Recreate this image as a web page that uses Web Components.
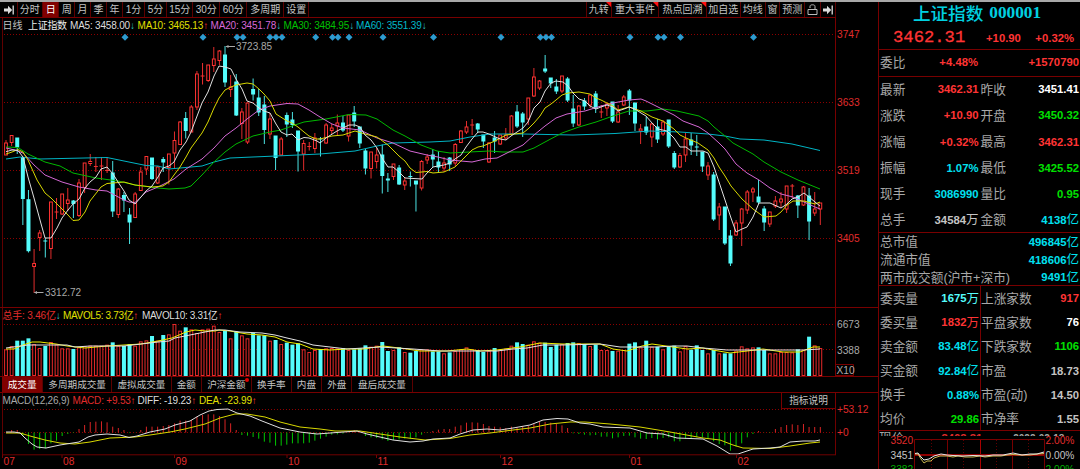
<!DOCTYPE html>
<html lang="zh-CN">
<head>
<meta charset="utf-8">
<title>上证指数 000001</title>
<style>
  body {
    margin: 0;
    background: #000;
    overflow: hidden;
  }
</style>
</head>
<body>
<stock-terminal></stock-terminal>

<script>
const STEP = 5.616;
const FIRST_X = 6;

// colour, high, open/close top, open/close bottom, low
const CANDLES = `
r 140 143 155 155|r 135 135.5 142.5 146|c 138 138 148 154|c 157 157.5 199.5 225|c 190 199.7 251.7 252.5
r 249 263.5 266.5 293|r 230 233 237.5 251|c 238 241 241 257.5|r 202 202 248.5 259|r 198 212 212 219
r 194 194 214 215|r 188 200 203.5 211|c 200 201 204.5 218|r 179 183 215.5 217|r 163 163 187.5 193
r 154 161.5 163.5 166|r 157 166.5 166.5 172|r 157 166 166 180|r 157 170.5 170.5 173|c 161 173 212 217
r 188 189 214.5 218|c 192 195.5 201 212|c 208 215 223 244|r 192 194 217.5 218|r 167 172 190.5 191
r 156 156.5 169 175|c 158 158 179.5 180|r 166 167 183 184|c 157 159.5 163 172|r 154 154 167.5 184.5
r 131.5 140.5 153 168|r 121 122 144.5 145|c 112 118.5 131.5 138.5|r 105 107 132 132|r 71 74 107 110
r 63 76 76 84.5|r 65 65 80.5 82|r 47 59 65.5 72|r 50 51 60.5 65|c 46 55 83 87
r 75 87 89.5 97|c 74 82 116 116|r 108 112 123.5 139|r 103 103 142 144|c 78.5 89.5 95 100.5
c 89 98 113 116|c 96 105 130.5 144|r 113 119 134 139|c 136 136 158.5 170|r 137 139 155 155
c 112.5 115.5 125 137|c 112 120 125.5 128|c 131 131 152 171.5|r 140 143.5 154 170.5|r 142 146.5 146.5 150.5
r 133 138 148.5 153|c 137 139 140 156.5|r 123 125 143 144|r 124 128 130.5 134|r 114.5 123 126 135
c 116 123 131 132|r 115 115 136 141.5|c 106 113 122 127|c 127 127 144 148|c 149 151 169 174.5
r 152 152 168.5 178.5|r 148 155 161.5 168.5|c 144.5 155 176.5 193.5|c 173 179 181 192|r 164 164 176.5 180
c 165 168 185 185|r 177 181 185 190|c 171.5 176.5 176.5 186.5|c 181 181 185 211.5|r 160 161.5 188 190.5
r 154 157 160 164|c 149 155 160 167|c 151 162 168 172|r 157 163 168 172|c 157 158 165 171
r 143 144.5 163 166|r 130 131 142.5 143|r 121 127 132 134|r 119 125 125 135|c 123 124 130 133
c 135 135 142 148|r 142 143 162 163|c 131 138 142 153|r 135 135 144 145|r 128 135 138 140
r 115 116 134 135|c 105 112 127 128|c 112 114 123 137|r 98 98 119 125|r 68 77 96 97
r 80 81 88 90|c 55 69 72 73|c 78 78 84 88|c 79 87 92 94|r 76 76 91 93
c 77 79 101 102|c 95 109 124 127|r 105 106 125 126|c 98 101 107 110|r 94 95 105 108
c 91 94 109 113|r 105 112 112 118|r 103 104 108 116|c 102 102 122 123|r 105 112 122 123
r 95 97 105 106|c 89 91 101 115|c 103 103 124 131|r 124 129 131 144|c 117 127 133 135
r 123 124 137 147|c 119 127 140 143|r 120 122 134 136|c 120 120 147 148|c 151 153.5 168 169
r 153 155.5 167 168|r 133 139 155 162|c 133 140 146 155|c 135 147 147 156|c 152 152 167 172
r 162 166 175 180|c 172 175 220 221|r 203 207 215 230|c 207 207 244 245|c 230 236 264 266
r 220 223 235 236|r 208 209 223 246|r 190 192 210 214|r 187 189 192 202|c 180 197 203 204
c 206 209 223 231|r 212 212 224 227|r 196 201 206 208|r 192 199 202 208|r 186 186 209 213
r 184 186 186 198|c 195 196 206 218|r 186 187 205 206|c 188 196 222 240|r 192 209 213 216
r 203 203 209 225`.trim().split(/[|\n]/).map((row) => {
  const [kind, ...nums] = row.split(" ");
  const [high, top, bottom, low] = nums.map(Number);
  return { up: kind === "r", high, top, bottom, low };
});

// tops of the volume bars, in thirds of a pixel below y = 300
const VOLUMES = [
  148, 138, 122, 122, 115, 132, 144, 138, 126, 133, 145, 145, 147, 142, 138, 137, 137, 137, 134, 127,
  137, 138, 132, 137, 124, 121, 108, 122, 105, 103, 72, 92, 82, 88, 99, 88, 86, 77, 96, 93,
  115, 95, 106, 115, 99, 106, 106, 122, 120, 132, 128, 134, 130, 148, 156, 150, 147, 145, 144, 145,
  144, 150, 148, 145, 136, 140, 137, 126, 153, 150, 142, 156, 158, 153, 148, 148, 154, 154, 160, 157,
  153, 148, 142, 148, 150, 156, 152, 144, 148, 146, 137, 127, 132, 134, 124, 128, 128, 141, 134, 132,
  129, 127, 129, 132, 138, 134, 150, 150, 153, 152, 150, 131, 127, 142, 122, 140, 140, 148, 140, 137,
  154, 138, 149, 136, 150, 160, 150, 160, 160, 160, 152, 139, 145, 142, 142, 150, 160, 160, 156, 156,
  157, 148, 150, 110, 136, 144,
];

// ends of the MACD bars, same units, zero line at 397
const MACD = [
  397, 390, 390, 408, 432, 449, 447, 445, 430, 422, 408, 402, 399, 387, 375, 366, 365, 364, 367, 380,
  384, 390, 399, 398, 390, 380, 380, 380, 378, 375, 370, 362, 362, 360, 350, 345, 343, 343, 348, 358,
  370, 390, 405, 407, 411, 416, 425, 428, 437, 437, 434, 430, 430, 430, 428, 422, 416, 410, 404, 403,
  401, 398, 390, 395, 408, 412, 414, 418, 423, 420, 418, 416, 416, 412, 404, 399, 393, 389, 387, 387,
  380, 376, 368, 367, 368, 372, 378, 380, 382, 384, 380, 382, 378, 378, 372, 366, 366, 368, 372, 376,
  384, 400, 402, 404, 406, 405, 410, 410, 415, 412, 408, 407, 412, 416, 417, 414, 418, 414, 412, 424,
  424, 416, 416, 412, 412, 416, 424, 432, 436, 452, 440, 430, 412, 402, 393, 398, 399, 387, 381, 375,
  373, 375, 372, 381, 381, 381,
];

const LINES = {
  ma5: "6,151.7 12,150 18,150.5 23,157 28,177 34,198 40,220 45,238 51,238 57,228 62,218 68,210 73,204 79,199 85,188 90,182 96,177 101,169 107,167 113,174 118,182 124,191 129,200 135,204 141,197 146,191 152,186 158,177 163,168 169,166 174,162 180,150 186,142 191,132 202,103 208,92 214,76 219,66 225,67 231,69 236,79 242,89 247,101 253,103 259,108 264,111 270,113 276,124 281,132 287,135 292,134 298,140 304,137.5 309,138 317,141 320,143 326,138 337,131 349,125 355,125 360,127 365,135 371,140 377,148 382,158 388,167 393,167 399,172 405,178 422,179 427,173 433,167 438,166 444,165 450,163 455,159 461,155 466,147 472,139 478,132 483,132 489,134 500,139 506,140 511,136 517,132 523,128 528,122 534,108 540,102 545,91 551,83 556,81 563,82 568,86 573,93 579,99 585,101 590,106 596,109 601,107 607,105 613,107 618,111 624,109 629,107 635,109 641,113 646,116 652,123 658,129 667,131 674,138 680,147 686,147 691,151 703,151 708,153 714,167 719,182 725,200 731,218 736,232 742,229 747,227 753,217 759,203 770,203 781,208 787,204 792,199 798,197 804,193 809,197 815,202 820,206",
  ma10: "6,154 12,152 18,149.5 23,152 28,160 37,180 45,193 51,198 60,207 68,215 73,220.5 79,220 85,212 90,201 101,187 107,183.5 124,182 135,185 152,187 163,186 169,182 174,175 180,167 186,157 191,148 202,133 208,122 214,108 219,98 225,90 231,87 236,85 247,83 253,84 259,89 264,94 270,101 276,114 287,121 292,123 298,127 304,132 309,136 316,139 320,139 332,136 343,135 355,131 365,134 377,137 388,145 399,156 405,161 410,168 416,172.5 427,171.5 433,173 444,172 455,167 463,159 472,150 478,147 483,146 495,141 506,135 523,133 528,129 534,123 540,116 545,108 551,104 556,100 562,95 568,93 579,92 590,94 596,98 601,100 613,106 618,110 629,107 641,111 652,117 663,121 674,129 680,135 686,138 698,143 708,150 714,158 719,167 725,176 731,186 742,199 753,209 764,217 776,216 781,212 787,205 793,201 804,201 815,204 820,202",
  ma20: "6,148 15,150 23,153 34,165 45,175 62,182 79,187 96,190 107,191 124,200 129,202 135,202.5 141,197 146,192 158,187 174,179 186,169 202,159 214,148 225,136 236,128 247,119 259,110 270,106 287,103.5 298,104 309,110 320,117 332,124 343,128 360,130 377,138 393,143 410,151 427,155 438,157 450,160 461,161 472,162 485,159 497,158 507,153 523,145 534,135 545,126 556,118 567,114 585,111 601,106 613,103 629,100 641,99 646,101 658,107 674,115 683,121 699,127 708,133 719,143 725,149 736,164 747,173 759,180 770,188 781,194 793,197 804,202 815,207 820,209",
  ma30: "6,147 18,147.5 28,154 45,162 60,166 73,173 96,178 118,181 135,185 158,188 169,189 185,188 191,186 202,175 214,162 225,152 236,144 253,136 270,132 281,130 292,126 304,122 326,119 349,114.5 366,115 377,119 393,130 405,136 421,145 437,151 450,153 489,151 503,152 523,152 534,148 545,142 562,133 579,127 596,122 613,116 629,111 647,111 663,109 677,111 699,116 708,121 714,127 725,136 733,143 753,154 764,162 781,172 798,180 820,189",
  ma60: "6,159 20,157 40,159 62,158.5 107,157.5 124,161 146,165.5 158,166 169,169 202,166 214,162 230,158 276,156 320,154 355,151 377,146 393,143 430,142 450,141 470,137 490,134 523,134 573,135 615,133.5 650,131 680,132 708,134 725,136 740,139 764,140 792,144 820,150.5",
  vol5: "6,349 14,349 23,345 32,342 40,342 56,344 67,346 85,348 107,346 124,345 141,344 158,341 172,338 186,332 195,330 205,331 215,331 219,330 230,331 247,334 262,335 275,337 287,342 300,344 313,349 330,350 347,349 363,349 383,346 407,349 420,351 447,351 467,349 480,351 497,350 520,347 540,343 563,344 600,344 613,349 627,351 642,346 652,344 673,347 687,349 703,348 713,350 730,353 747,351 763,349 783,352 800,352 813,347 820,347",
  vol10: "6,348 28,345 67,345 75,347 90,346 124,346 141,344 158,342 169,341 175,338 190,335 205,332 215,330 225,330 240,332 262,333 275,335 287,338 300,341 313,345 330,347 347,349 380,347 413,349 440,351 467,351 497,351 513,349 527,348 543,345 563,345 600,344 620,347 657,347 673,346 687,346 703,348 727,350 803,350 820,349",
  diff: "6,432 14,432 20,433 25,438 32,444 37,447 46,448 60,445 79,442 88,437 95,435 107,434 120,435 129,437.5 137,436 150,432 165,429 175,425 190,421 200,415 209,411 217,409.5 228,409 237,413 250,416 262,421 280,428 300,432 317,434 330,433 357,431 367,434 380,437 393,440 410,442 423,441 433,439 450,438 460,434 473,430 487,429 500,430 513,428 530,425 543,420 557,418.5 568,419 580,423 590,424 603,427 630,428 647,433 663,434 677,438 703,439 717,446 730,454 738,454 753,449 770,448 780,447 790,442 803,441 815,441 820,440",
  dea: "6,433 20,433 30,436 45,440 60,443 75,444 90,442 110,438 135,437 150,435 170,432 185,429 205,424 220,418 235,414 247,414 265,417 280,422 300,427 320,429 335,431 360,431 380,434 400,437 425,440 450,438.5 470,435 490,433 513,430 530,428 550,424 570,422 585,422 610,424 640,427 670,432 703,438 720,440 733,445 743,448 770,448.5 790,446 810,443 820,442",
};

const SANS = '"Liberation Sans", "Noto Sans CJK SC", sans-serif';
const RED = "#e02c2c";

const line = (name, color) =>
  `<polyline points="${LINES[name]}" fill="none" stroke="${color}" stroke-width="1"/>`;
const grid = (y) =>
  `<line x1="4" x2="835" y1="${y}" y2="${y}" stroke="#8c0000" stroke-dasharray="1 2"/>`;
const xAt = (i) => FIRST_X + i * STEP;

function setShadow(element, html) {
  element.attachShadow({ mode: "open" }).innerHTML = html;
}

class ToolButton extends HTMLElement {
  connectedCallback() {
    setShadow(this, `
      <style>
        :host {
          box-sizing: border-box;
          flex: none;
          display: flex;
          align-items: center;
          justify-content: center;
          width: calc(var(--w) * 1px);
          height: 15px;
          border-right: 1px solid #5c0000;
          color: #c4c4c4;
          font: var(--size, 10px)/15px ${SANS};
          white-space: nowrap;
          position: relative;
        }
        :host([active]) { background: #800000; color: #fff; }
        :host([hot])::after {
          content: "";
          position: absolute;
          top: 0;
          right: 0;
          border-top: 5px solid #ff1010;
          border-left: 5px solid transparent;
        }
        :host([dot])::after {
          content: "";
          position: absolute;
          top: 1px;
          right: 2px;
          width: 4px;
          height: 4px;
          border-radius: 50%;
          background: #e00000;
        }
      </style>
      <slot></slot>`);
    this.style.setProperty("--w", this.getAttribute("w"));
  }
}

class ToolBar extends HTMLElement {
  connectedCallback() {
    const arrow = `<svg width="12" height="10" viewBox="0 0 12 10"><path d="M1 3.5h4V0.8L9.2 5 5 9.2V6.5H1z" fill="#ddd"/><path d="M10.2 .5v9" stroke="#ddd" stroke-width="1.3"/></svg>`;
    const lock = `<svg width="11" height="12" viewBox="0 0 11 12"><path d="M1 5.5h9v5H1zM3 4V2.500C3 1.2 4 .8 5.5.8S8 1.2 8 2.500v3" fill="none" stroke="#bbb"/></svg>`;
    setShadow(this, `
      <style>
        :host {
          display: flex;
          height: 15px;
          width: 834px;
          padding-left: 2px;
          border-bottom: 1px solid #780000;
        }
        .right { display: flex; margin-left: auto; border-left: 1px solid #5c0000; }
      </style>
      <tool-button w="15.7">${arrow}</tool-button>
      <tool-button w="25.3">分时</tool-button>
      <tool-button w="16.5" active>日</tool-button>
      <tool-button w="15.5">周</tool-button>
      <tool-button w="16">月</tool-button>
      <tool-button w="16">季</tool-button>
      <tool-button w="16">年</tool-button>
      <tool-button w="22">1分</tool-button>
      <tool-button w="22">5分</tool-button>
      <tool-button w="26.5">15分</tool-button>
      <tool-button w="26.5">30分</tool-button>
      <tool-button w="27.5">60分</tool-button>
      <tool-button w="36.5">多周期</tool-button>
      <tool-button w="25.5">设置</tool-button>
      <div class="right">
        <tool-button w="25" hot>九转</tool-button>
        <tool-button w="47.6" hot>重大事件</tool-button>
        <tool-button w="47.4" hot>热点回溯</tool-button>
        <tool-button w="34">加自选</tool-button>
        <tool-button w="25">均线</tool-button>
        <tool-button w="14.6">窗</tool-button>
        <tool-button w="25">预测</tool-button>
        <tool-button w="15.4">${lock}</tool-button>
        <tool-button w="15.3">${arrow}</tool-button>
      </div>`);
  }
}

class ChartLegend extends HTMLElement {
  connectedCallback() {
    setShadow(this, `
      <style>
        :host {
          box-sizing: border-box;
          display: flex;
          width: 836px;
          height: var(--h, 14px);
          padding-left: 2.5px;
          border-right: 1px solid #780000;
          font: 10px/15px ${SANS};
          white-space: pre;
          color: #c4c4c4;
        }
      </style>
      <slot></slot>`);
  }
}

class LegendItem extends HTMLElement {
  connectedCallback() {
    const trend = this.getAttribute("trend");
    const mark = trend ? `<span class="mark">${trend === "up" ? "↑" : "↓"}</span>` : "";
    setShadow(this, `
      <style>
        :host {
          flex: none;
          display: flex;
          width: calc(var(--w) * 1px);
        }
        .mark {
          color: ${trend === "up" ? "#ff3434" : "#30c8c8"};
          font: 10px/15px "Liberation Sans", sans-serif;
        }
      </style>
      <slot></slot>${mark}`);
    this.style.setProperty("--w", this.getAttribute("w"));
    this.style.color = this.getAttribute("color");
    this.style.letterSpacing = this.getAttribute("tight") || "0";
  }
}

class PriceChart extends HTMLElement {
  connectedCallback() {
    const events = [125, 203, 237, 243, 270, 276, 282, 315.7, 332.5, 338, 349, 383, 433.5, 501,
      540.3, 546, 551.5, 630, 658, 664, 680.5, 753.5];
    const levels = [[34.5, 3747], [102.5, 3633], [170.5, 3519], [238.5, 3405]];
    setShadow(this, `
      <style>
        :host { display: block; height: 275px; }
        svg { display: block; overflow: visible; font: 10px ${SANS}; }
      </style>
      <svg width="878" height="275" viewBox="0 32 878 275">
        ${levels.map(([y]) => grid(y)).join("")}
        <path d="M835.5 32v275" stroke="#780000"/>
        ${levels.map(([y, v]) => `<text x="837" y="${y + 3.5}" fill="${RED}" font-size="10.2">${v}</text>`).join("")}
        ${events.map((x) => `<path d="M${x} 33.8l3.5 3.5-3.5 3.5-3.5-3.5z" fill="#2d9bd0"/>`).join("")}
        ${CANDLES.map((c, i) => this.candle(c, xAt(i))).join("")}
        ${line("ma60", "#00b4c4")}
        ${line("ma30", "#00b800")}
        ${line("ma20", "#d468d4")}
        ${line("ma10", "#d8d800")}
        ${line("ma5", "#e0e0e0")}
        <g stroke="#aaa" fill="#aaa">
          <path d="M226 46.5h9"/><path d="M225.5 46.5l3-1.5v3z" stroke="none"/>
          <path d="M34.5 292.5h9"/><path d="M34 292.5l3-1.5v3z" stroke="none"/>
        </g>
        <text x="236" y="50" fill="#a8a8a8">3723.85</text>
        <text x="45" y="296.3" fill="#a8a8a8">3312.72</text>
      </svg>`);
  }

  candle({ up, high, top, bottom, low }, x) {
    if (!up) {
      return `<path d="M${x} ${high}V${low}" stroke="#4ce4e4"/>
        <rect x="${x - 2}" y="${top - 0.5}" width="4" height="${Math.max(bottom - top, 1)}" fill="#54fcfc"/>`;
    }
    if (top === bottom) {
      return `<path d="M${x} ${high}V${low}M${x - 2} ${top}h4" stroke="#f03030"/>`;
    }
    return `<path d="M${x} ${high}V${top}M${x} ${bottom}V${low}" stroke="#e02c2c"/>
      <rect x="${x - 1.4}" y="${top}" width="2.8" height="${bottom - top}" fill="#000" stroke="#ff3232"/>`;
  }
}

class VolumeChart extends HTMLElement {
  connectedCallback() {
    const bars = VOLUMES.map((v, i) => {
      const y = 300 + v / 3;
      const x = xAt(i);
      return CANDLES[i].up
        ? `<rect x="${x - 1.4}" y="${y + 0.5}" width="2.8" height="${375 - y}" fill="#000" stroke="#e62a2a"/>`
        : `<rect x="${x - 2}" y="${y}" width="4" height="${376 - y}" fill="#54fcfc"/>`;
    });
    setShadow(this, `
      <style>
        :host { display: block; height: 54px; border-bottom: 1px solid #780000; }
        svg { display: block; overflow: visible; font: 10.2px ${SANS}; }
      </style>
      <svg width="878" height="54" viewBox="0 322 878 54">
        ${grid(324.5)}${grid(349.5)}
        ${bars.join("")}
        ${line("vol5", "#f0f000")}
        ${line("vol10", "#e4e4e4")}
        <path d="M835.5 322v54M835.5 364.5h18v11h-18" fill="none" stroke="#780000"/>
        <g fill="#aaa">
          <text x="837" y="328">6673</text>
          <text x="837" y="353.7">3388</text>
          <text x="836.5" y="374">X10</text>
        </g>
      </svg>`);
  }
}

class IndicatorTabs extends HTMLElement {
  connectedCallback() {
    setShadow(this, `
      <style>
        :host {
          --size: 9.6px;
          display: flex;
          height: 15px;
          padding-left: 2px;
          border-bottom: 1px solid #780000;
        }
      </style>
      <tool-button w="41.3" active>成交量</tool-button>
      <tool-button w="68.7">多周期成交量</tool-button>
      <tool-button w="60">虚拟成交量</tool-button>
      <tool-button w="29.7">金额</tool-button>
      <tool-button w="50.3" dot>沪深金额</tool-button>
      <tool-button w="39.7">换手率</tool-button>
      <tool-button w="30.6">内盘</tool-button>
      <tool-button w="30">外盘</tool-button>
      <tool-button w="60.4">盘后成交量</tool-button>`);
  }
}

class MacdChart extends HTMLElement {
  connectedCallback() {
    const bars = MACD.map((v, i) => {
      const color = v <= 397 ? "#d82424" : "#00c800";
      return `<path d="M${xAt(i)} 432.5V${300 + v / 3}" stroke="${color}"/>`;
    });
    const months = [[2.5, "07"], [62, "08"], [174.5, "09"], [287, "10"], [376.5, "11"], [500.5, "12"], [629.5, "01"], [736.5, "02"]];
    setShadow(this, `
      <style>
        :host { display: block; height: 61px; }
        svg { display: block; overflow: visible; font: 10.2px ${SANS}; }
      </style>
      <svg width="878" height="61" viewBox="0 408 878 61">
        ${grid(409.5)}${grid(432.5)}
        ${bars.join("")}
        ${line("dea", "#d8d800")}
        ${line("diff", "#e0e0e0")}
        <path d="M835.5 408v47M2 454.8h834" stroke="#700000"/>
        <g fill="${RED}">
          <text x="837" y="413">+53.12</text>
          <text x="837" y="436">+0</text>
          ${months.map(([x, m]) => `<path d="M${x} 455v3" stroke="#780000"/><text x="${x + 1}" y="465.3">${m}</text>`).join("")}
        </g>
      </svg>`);
  }
}

class ChartArea extends HTMLElement {
  connectedCallback() {
    setShadow(this, `
      <style>
        :host {
          box-sizing: border-box;
          display: block;
          width: 878px;
          background: linear-gradient(#600000, #600000) 2px 16px / 1px 437px no-repeat;
        }
        price-chart { border-bottom: 1px solid #780000; }
        .note {
          box-sizing: border-box;
          width: 54px;
          height: 16px;
          margin-left: auto;
          border: 1px solid #780000;
          border-top: 0;
          border-right: 0;
          text-align: center;
          font-size: 9.7px;
        }
      </style>
      <tool-bar></tool-bar>
      <chart-legend>
        <legend-item w="25.5">日线</legend-item>
        <legend-item w="42" color="#eee" tight="-.3px">上证指数</legend-item>
        <legend-item w="67.5" color="#ddd" tight="-.2px" trend="down">MA5: 3458.00</legend-item>
        <legend-item w="73" color="#e0e000" tight="-.17px" trend="up">MA10: 3465.13</legend-item>
        <legend-item w="73" color="#d868d8" tight="-.17px" trend="down">MA20: 3451.78</legend-item>
        <legend-item w="72.5" color="#00c000" tight="-.17px" trend="down">MA30: 3484.95</legend-item>
        <legend-item w="80" color="#00b8c8" tight="-.17px" trend="down">MA60: 3551.39</legend-item>
      </chart-legend>
      <price-chart></price-chart>
      <chart-legend>
        <legend-item w="60.5" color="${RED}" tight="-.2px" trend="down">总手: 3.46亿</legend-item>
        <legend-item w="79" color="#e0e000" tight="-.35px" trend="up">MAVOL5: 3.73亿</legend-item>
        <legend-item w="90" color="#ddd" tight="-.35px" trend="up">MAVOL10: 3.31亿</legend-item>
      </chart-legend>
      <volume-chart></volume-chart>
      <indicator-tabs></indicator-tabs>
      <chart-legend style="--h: 15px">
        <legend-item w="70" color="#a8a8a8" tight="-.2px">MACD(12,26,9)</legend-item>
        <legend-item w="65" color="${RED}" tight="-.2px" trend="up">MACD: +9.53</legend-item>
        <legend-item w="61.5" color="#ddd" tight="-.2px" trend="up">DIFF: -19.23</legend-item>
        <legend-item w="70" color="#e0e000" tight="-.15px" trend="up">DEA: -23.99</legend-item>
        <div class="note">指标说明</div>
      </chart-legend>
      <macd-chart></macd-chart>`);
  }
}

const TONES = {
  red: "#ff3434",
  green: "#00e000",
  cyan: "#00e0f0",
  pale: "#54fcfc",
  white: "#fff",
  grey: "#c4c4c4",
};

class QuoteCell extends HTMLElement {
  connectedCallback() {
    const unit = this.getAttribute("unit") || "";
    setShadow(this, `
      <style>
        :host {
          box-sizing: border-box;
          display: flex;
          align-items: center;
          justify-content: space-between;
          padding: 0 1px;
          color: #a8a8a8;
          font: 12.7px/1 ${SANS};
          white-space: nowrap;
          min-width: 0;
        }
        b {
          display: flex;
          align-items: center;
          font-size: 11.3px;
          color: var(--tone);
        }
        i { font: 12.5px/1 ${SANS}; }
      </style>
      <span>${this.getAttribute("label")}</span>
      <b>${this.getAttribute("value")}${unit ? `<i>${unit}</i>` : ""}</b>`);
    this.style.setProperty("--tone", TONES[this.getAttribute("tone")]);
  }
}

const cell = (label, value, tone, unit = "") =>
  `<quote-cell label="${label}" value="${value}" tone="${tone}" unit="${unit}"></quote-cell>`;

class MiniChart extends HTMLElement {
  connectedCallback() {
    setShadow(this, `
      <style>
        :host { display: block; height: 33px; }
        svg { display: block; font: 10.2px ${SANS}; }
      </style>
      <svg width="201" height="33" viewBox="879 436 201 33">
        <path d="M914.5 469V439.5H1044.5V469M947.5 440v29M1012.5 440v29" fill="none" stroke="#780000"/>
        <path d="M980.5 440v29" stroke="#a80000"/>
        <path d="M931.5 440v29M963.5 440v29M996.5 440v29M1028.5 440v29" stroke="#600000" stroke-dasharray="1 2"/>
        <path d="M915 455h129" stroke="#900000" stroke-width="2"/>
        <polyline points="915,454 918,454 921,459 924,463 927,461 931,461 934,458 940,456 947,456 953,457 958,456 965,457 973,457 980,456 985,457 993,456 1001,456 1007,455 1013,454.5 1020,455 1030,455 1037,454 1044,453.5" fill="none" stroke="#c9b850"/>
        <polyline points="915,453.5 918,453 921,457 924,460 929,459 934,456 941,454 947,455 953,455.5 963,456 973,455.5 985,456 993,455 1003,455 1013,453 1022,455 1030,454 1037,454 1044,452" fill="none" stroke="#e8e8e8"/>
        <text x="890.5" y="444.3" fill="${RED}">3520</text>
        <text x="890.5" y="458.7" fill="#c4c4c4">3451</text>
        <text x="890.5" y="473" fill="#00b000">3382</text>
        <text x="1045.5" y="444.3" fill="${RED}">2.00%</text>
        <text x="1045.5" y="458.7" fill="#c4c4c4">0.00%</text>
        <text x="1045.5" y="473" fill="#00b000">2.00%</text>
      </svg>`);
  }
}

class QuotePanel extends HTMLElement {
  connectedCallback() {
    setShadow(this, `
      <style>
        :host {
          box-sizing: border-box;
          display: block;
          width: 202px;
          height: 467px;
          border-left: 1px solid #780000;
          overflow: hidden;
        }
        section { box-sizing: border-box; display: grid; border-bottom: 1px solid #780000; }
        .head {
          height: 48px;
          grid-template-rows: 21px 26px;
        }
        .title {
          display: flex;
          align-items: center;
          justify-content: center;
          gap: 6px;
          padding-right: 5px;
          color: #00d0e0;
          font: bold 17.3px/19px "Liberation Serif", serif;
        }
        .title span { font: 500 17.6px/19px "Noto Sans CJK SC", sans-serif; }
        .price {
          display: grid;
          grid-template-columns: 93px 48px 1fr;
          align-items: center;
          padding: 3px 6px 0 14px;
          color: #ff3434;
          font: bold 11.3px/1 ${SANS};
        }
        .price > * { padding-top: 3px; }
        .price .last { padding: 0; font: 17.2px/1 "Liberation Mono", monospace; -webkit-text-stroke: .3px #ff3434; }
        .price :last-child { text-align: right; }
        .ratio { height: 27px; grid-template-columns: 100px 101px; }
        .ratio quote-cell:last-child { justify-content: flex-end; }
        .basic { height: 156px; grid: repeat(6, 26.1px) / 100.5px 100.5px; }
        .totals { height: 53px; padding-top: 1px; grid-auto-rows: 17.6px; }
        .flow { height: 145px; padding-top: 1px; grid: repeat(6, 24.05px) / 101px 100px;
          background: linear-gradient(#780000, #780000) 101px 0 / 1px 100% no-repeat; }
        .clip { display: flex; height: 5px; overflow: hidden; align-items: flex-start; color: #a8a8a8; font: 12.7px/15px ${SANS}; }
        .clip b { font-size: 11.3px; color: ${RED}; margin-left: 37px; }
        .clip b + b { color: #a8a8a8; margin-left: 31px; font-size: 10px; }
      </style>
      <section class="head">
        <div class="title"><span>上证指数</span>000001</div>
        <div class="price"><span class="last">3462.31</span><span>+10.90</span><span>+0.32%</span></div>
      </section>
      <section class="ratio">
        ${cell("委比", "+4.48%", "red")}${cell("", "+1570790", "red")}
      </section>
      <section class="basic">
        ${cell("最新", "3462.31", "red")}${cell("昨收", "3451.41", "white")}
        ${cell("涨跌", "+10.90", "red")}${cell("开盘", "3450.32", "green")}
        ${cell("涨幅", "+0.32%", "red")}${cell("最高", "3462.31", "red")}
        ${cell("振幅", "1.07%", "cyan")}${cell("最低", "3425.52", "green")}
        ${cell("现手", "3086990", "cyan")}${cell("量比", "0.95", "green")}
        ${cell("总手", "34584", "grey", "万")}${cell("金额", "4138", "cyan", "亿")}
      </section>
      <section class="totals">
        ${cell("总市值", "496845", "cyan", "亿")}
        ${cell("流通市值", "418606", "cyan", "亿")}
        ${cell("两市成交额(沪市+深市)", "9491", "cyan", "亿")}
      </section>
      <section class="flow">
        ${cell("委卖量", "1675", "pale", "万")}${cell("上涨家数", "917", "red")}
        ${cell("委买量", "1832", "red", "万")}${cell("平盘家数", "76", "white")}
        ${cell("卖金额", "83.48", "cyan", "亿")}${cell("下跌家数", "1106", "green")}
        ${cell("买金额", "92.84", "cyan", "亿")}${cell("市盈", "18.73", "grey")}
        ${cell("换手", "0.88%", "cyan")}${cell("市盈(动)", "14.50", "grey")}
        ${cell("均价", "29.86", "green")}${cell("市净率", "1.55", "grey")}
      </section>
      <div class="clip"><span>现价</span><b>3462.31</b><b>2022-02-18</b></div>
      <mini-chart></mini-chart>`);
  }
}

class StockTerminal extends HTMLElement {
  connectedCallback() {
    setShadow(this, `
      <style>
        :host {
          box-sizing: border-box;
          display: grid;
          grid-template-columns: 878px 202px;
          width: 1080px;
          height: 469px;
          overflow: hidden;
          border-top: 2px solid #a8a8a8;
          background: #000;
        }
      </style>
      <chart-area></chart-area>
      <quote-panel></quote-panel>`);
  }
}

customElements.define("tool-button", ToolButton);
customElements.define("tool-bar", ToolBar);
customElements.define("chart-legend", ChartLegend);
customElements.define("legend-item", LegendItem);
customElements.define("price-chart", PriceChart);
customElements.define("volume-chart", VolumeChart);
customElements.define("indicator-tabs", IndicatorTabs);
customElements.define("macd-chart", MacdChart);
customElements.define("chart-area", ChartArea);
customElements.define("quote-cell", QuoteCell);
customElements.define("mini-chart", MiniChart);
customElements.define("quote-panel", QuotePanel);
customElements.define("stock-terminal", StockTerminal);
</script>
</body>
</html>
